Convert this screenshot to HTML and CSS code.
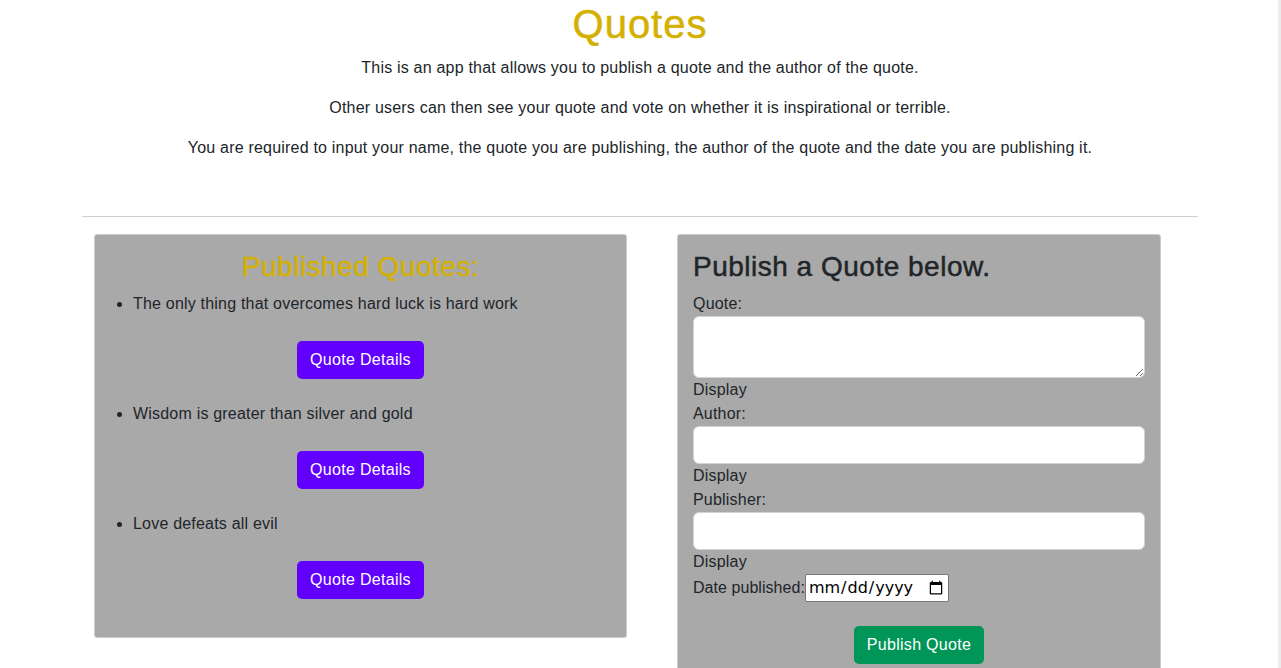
FILE: index.html
```html
<!DOCTYPE html>
<html lang="en">
<head>
<meta charset="utf-8">
<title>Quotes</title>
<link rel="stylesheet" href="styles.css">
</head>
<body>
<div class="container">
  <header class="intro">
    <h1 class="title">Quotes</h1>
    <p>This is an app that allows you to publish a quote and the author of the quote.</p>
    <p>Other users can then see your quote and vote on whether it is inspirational or terrible.</p>
    <p>You are required to input your name, the quote you are publishing, the author of the quote and the date you are publishing it.</p>
  </header>
  <hr class="divider">
  <div class="row">
    <section class="card card-left">
      <h2 class="published-title">Published Quotes:</h2>
      <ul class="quote-list">
        <li>
          <span class="quote-text">The only thing that overcomes hard luck is hard work</span>
          <div class="btn-wrap"><button class="btn btn-details">Quote Details</button></div>
        </li>
        <li>
          <span class="quote-text">Wisdom is greater than silver and gold</span>
          <div class="btn-wrap"><button class="btn btn-details">Quote Details</button></div>
        </li>
        <li>
          <span class="quote-text">Love defeats all evil</span>
          <div class="btn-wrap"><button class="btn btn-details">Quote Details</button></div>
        </li>
      </ul>
    </section>
    <section class="card card-right">
      <h2 class="form-title">Publish a Quote below.</h2>
      <form class="quote-form">
        <label class="lbl">Quote:</label>
        <textarea class="field field-area" rows="2"></textarea>
        <div class="lbl">Display</div>
        <label class="lbl">Author:</label>
        <input class="field" type="text">
        <div class="lbl">Display</div>
        <label class="lbl">Publisher:</label>
        <input class="field" type="text">
        <div class="lbl">Display</div>
        <div class="date-row"><label>Date published:</label><input class="date-field" type="date"></div>
        <div class="submit-wrap"><button type="button" class="btn btn-publish">Publish Quote</button></div>
      </form>
    </section>
  </div>
</div>
<div class="scroll-strip"></div>
</body>
</html>
```
FILE: styles.css
```css
* { box-sizing: border-box; }
html, body { margin: 0; padding: 0; }
body {
  font-family: "Liberation Sans", Arial, sans-serif;
  font-size: 16px;
  line-height: 1.5;
  letter-spacing: 0.2px;
  color: #212529;
  background: #fff;
  padding-right: 1px;
}
.container {
  width: 1116px;
  margin: 0 auto;
}
.intro { text-align: center; }
.title {
  margin: 0 0 8px;
  font-size: 40px;
  line-height: 1.2;
  font-weight: 500;
  letter-spacing: 1px;
  -webkit-text-stroke: 0.5px #d4b000;
  color: #d4b000;
}
.intro p { margin: 0 0 16px; }
.divider {
  margin: 56px 0 17px;
  border: 0;
  border-top: 1px solid #cfcfcf;
}
.row {
  display: flex;
  align-items: flex-start;
}
.card {
  background: #a9a9a9;
  border: 1px solid #cdcdcd;
  border-radius: 3px;
  padding: 15px 15px;
}
.card-left {
  margin-left: 12px;
  width: 533px;
  padding-bottom: 15px;
}
.card-right {
  margin-left: 50px;
  width: 484px;
  padding-bottom: 40px;
}
.published-title, .form-title {
  margin: 0 0 8px;
  font-size: 28px;
  line-height: 1.2;
  font-weight: 500;
  letter-spacing: 0.5px;
}
.published-title {
  text-align: center;
  color: #d4b000;
  -webkit-text-stroke: 0.4px #d4b000;
}
.form-title {
  color: #212529;
  -webkit-text-stroke: 0.5px #212529;
}
.quote-list {
  margin: 0;
  padding-left: 23px;
}
.btn-wrap {
  margin: 25px 0 23px -23px;
  text-align: center;
}
.btn {
  font: inherit;
  letter-spacing: 0.3px;
  line-height: 24px;
  padding: 6px 12px;
  border: 1px solid transparent;
  border-radius: 5px;
  color: #fff;
  cursor: pointer;
}
.btn-details { background: #6200ff; }
.btn-publish { background: #009658; }
.quote-form { display: flex; flex-direction: column; }
.lbl { display: block; }
.field {
  display: block;
  width: 100%;
  height: 38px;
  padding: 6px 12px;
  font: inherit;
  border: 1px solid #ced4da;
  border-radius: 6px;
  background: #fff;
}
.field-area { height: 62px; resize: vertical; }
.date-row {
  display: flex;
  align-items: center;
  height: 28px;
  letter-spacing: 0.05px;
}
.date-field {
  width: 144px;
  height: 28px;
  font-size: 16px;
  letter-spacing: 0;
  font-family: "DejaVu Sans", sans-serif;
  border: 1px solid #767676;
  border-radius: 2px;
  background: #fff;
  padding: 1px 2px;
}
.submit-wrap {
  text-align: center;
  margin-top: 24px;
}
.scroll-strip {
  position: fixed;
  top: 0;
  right: 0;
  width: 3px;
  height: 100%;
  background: #ececec;
}
```
